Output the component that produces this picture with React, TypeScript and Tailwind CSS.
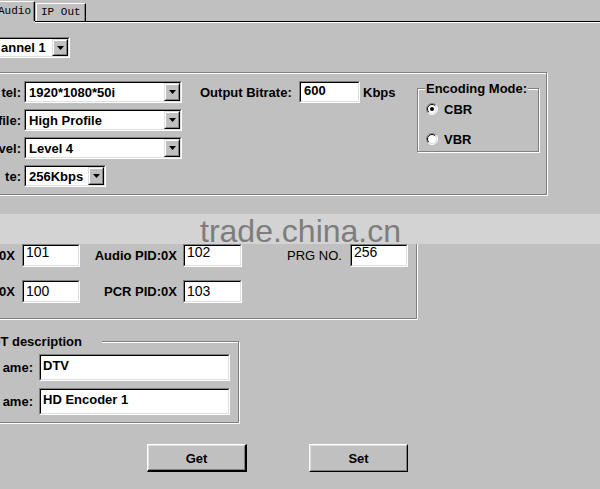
import React from "react";

type Box = { className?: string; children?: React.ReactNode };

// sunken white edit box, classic 3D look
const Field = ({ className = "", children }: Box) => (
  <div className={`border border-t-[#808080] border-l-[#808080] border-r-white border-b-white ${className}`}>
    <div className="flex h-full w-full items-center overflow-hidden border border-t-black border-l-black border-r-[#dfdfdf] border-b-[#dfdfdf] bg-white">
      {children}
    </div>
  </div>
);

const DropButton = () => (
  <div className="w-[16px] self-stretch border border-t-[#dfdfdf] border-l-[#dfdfdf] border-r-black border-b-black bg-[#c0c0c0]">
    <div className="flex h-full w-full items-center justify-center border border-t-white border-l-white border-r-[#808080] border-b-[#808080]">
      <svg width="7" height="4" viewBox="0 0 7 4">
        <path d="M0 0h7L3.5 4z" fill="#000" />
      </svg>
    </div>
  </div>
);

const Combo = ({ value, className }: { value: string; className?: string }) => (
  <Field className={className}>
    <span className="flex-1 whitespace-nowrap pl-[3px]">{value}</span>
    <DropButton />
  </Field>
);

// etched frame used for group boxes
const Group = ({ className = "", children }: Box) => (
  <div className={`relative border border-[#808080] shadow-[inset_1px_1px_0_#fff,1px_1px_0_#fff] ${className}`}>
    {children}
  </div>
);

const Radio = ({ checked }: { checked?: boolean }) => (
  <svg width="12" height="12" viewBox="0 0 12 12">
    <circle cx="6" cy="6" r="5" fill="#fff" />
    <path d="M2.1 9.9A5.5 5.5 0 0 1 9.9 2.1" fill="none" stroke="#808080" />
    <path d="M2.8 9.2A4.5 4.5 0 0 1 9.2 2.8" fill="none" stroke="#000" />
    <path d="M9.9 2.1A5.5 5.5 0 0 1 2.1 9.9" fill="none" stroke="#fff" />
    <path d="M9.2 2.8A4.5 4.5 0 0 1 2.8 9.2" fill="none" stroke="#dfdfdf" />
    {checked && <circle cx="6" cy="6" r="2" fill="#000" />}
  </svg>
);

const PushButton = ({ label, primary, className = "" }: { label: string; primary?: boolean; className?: string }) => (
  <button
    className={`h-[28px] border border-t-white border-l-white border-r-black border-b-black bg-[#c0c0c0] ${
      primary ? "border-r-2 border-b-2" : ""
    } ${className}`}
  >
    <div className="flex h-full w-full items-center justify-center border border-t-[#dfdfdf] border-l-[#dfdfdf] border-r-[#808080] border-b-[#808080] pt-[1px]">
      {label}
    </div>
  </button>
);

const Label = ({ className = "", children }: Box) => (
  <div className={`flex items-center justify-end whitespace-nowrap ${className}`}>{children}</div>
);

export default function App() {
  return (
    <div className="relative h-[489px] w-[600px] overflow-hidden bg-[#c0c0c0] font-['Liberation_Sans',Arial,sans-serif] text-[13px] font-bold leading-none text-black">
      {/* tab strip */}
      <div className="flex h-[21px] items-end font-['Liberation_Mono',monospace] text-[11px] font-normal">
        <div className="-ml-[7px] flex h-[20px] w-[42px] items-center border-t border-t-white border-r border-r-black pl-[5px] shadow-[inset_-1px_0_0_#808080]">
          Audio
        </div>
        <div className="ml-[1px] flex h-[18px] w-[50px] items-center border border-b-0 border-t-white border-l-white border-r-black pl-[4px] shadow-[inset_-1px_0_0_#808080]">
          IP Out
        </div>
      </div>
      <div className="flex h-[2px]">
        <div className="w-[35px]" />
        <div className="flex-1 border-t border-t-black border-b border-b-white" />
      </div>

      {/* channel */}
      <Combo value="annel 1" className="ml-[-20px] mt-[14px] h-[21px] w-[90px] [&_span]:pl-[19px]" />

      {/* video settings */}
      <Group className="-ml-[10px] mt-[14px] h-[123px] w-[557px]">
        <div className="flex pt-[8px]">
          <div className="flex w-[30px] flex-col gap-[6px]">
            <Label className="h-[22px]">tel:</Label>
            <Label className="h-[22px]">file:</Label>
            <Label className="h-[22px]">vel:</Label>
            <Label className="h-[22px]">te:</Label>
          </div>
          <div className="ml-[3px] flex w-[158px] flex-col gap-[6px]">
            <Combo value="1920*1080*50i" className="h-[22px] w-[158px]" />
            <Combo value="High Profile" className="h-[22px] w-[158px]" />
            <Combo value="Level 4" className="h-[22px] w-[158px]" />
            <Combo value="256Kbps" className="h-[22px] w-[82px]" />
          </div>
          <div className="ml-[18px] flex h-[22px] w-[196px] items-center">
            <span className="w-[93px] whitespace-nowrap">Output Bitrate:</span>
            <Field className="ml-[6px] h-[22px] w-[61px]">
              <span className="-mt-[3px] pl-[3px]">600</span>
            </Field>
            <span className="ml-[3px]">Kbps</span>
          </div>
          <Group className="ml-[21px] mt-[7px] h-[64px] w-[122px]">
            <span className="absolute left-[7px] top-[-8px] bg-[#c0c0c0] px-[1px] leading-[15px]">Encoding Mode:</span>
            <div className="flex flex-col gap-[18px] pl-[8px] pt-[14px]">
              <div className="flex h-[12px] items-center gap-[6px]">
                <Radio checked />
                <span>CBR</span>
              </div>
              <div className="flex h-[12px] items-center gap-[6px]">
                <Radio />
                <span>VBR</span>
              </div>
            </div>
          </Group>
        </div>
      </Group>

      {/* PID settings */}
      <Group className="-ml-[10px] mt-[31px] h-[93px] w-[427px]">
        <div className="flex flex-col gap-[13px] pt-[17px]">
          <div className="flex h-[23px]">
            <Label className="w-[24px]">0X</Label>
            <Field className="ml-[7px] w-[58px]">
              <span className="-mt-[7px] pl-[2px] text-[14px] font-normal">101</span>
            </Field>
            <Label className="w-[97px]">Audio PID:0X</Label>
            <Field className="ml-[6px] w-[59px]">
              <span className="-mt-[7px] pl-[2px] text-[14px] font-normal">102</span>
            </Field>
            <Label className="ml-[45px] w-[55px] justify-start font-normal">PRG NO.</Label>
            <Field className="ml-[8px] w-[58px]">
              <span className="-mt-[7px] pl-[2px] text-[14px] font-normal">256</span>
            </Field>
          </div>
          <div className="flex h-[23px]">
            <Label className="w-[24px]">0X</Label>
            <Field className="ml-[7px] w-[58px]">
              <span className="-mt-[2px] pl-[2px] text-[14px] font-normal">100</span>
            </Field>
            <Label className="w-[97px]">PCR PID:0X</Label>
            <Field className="ml-[6px] w-[59px]">
              <span className="-mt-[2px] pl-[2px] text-[14px] font-normal">103</span>
            </Field>
          </div>
        </div>
      </Group>

      {/* service description */}
      <Group className="-ml-[10px] mt-[22px] h-[82px] w-[249px]">
        <span className="absolute left-0 top-[-8px] bg-[#c0c0c0] pr-[20px] leading-[15px]">DT description</span>
        <div className="flex flex-col gap-[7px] pt-[12px]">
          <div className="flex h-[27px]">
            <Label className="w-[42px]">ame:</Label>
            <Field className="ml-[6px] w-[191px]">
              <span className="-mt-[5px] pl-[2px]">DTV</span>
            </Field>
          </div>
          <div className="flex h-[27px]">
            <Label className="w-[42px]">ame:</Label>
            <Field className="ml-[6px] w-[191px]">
              <span className="-mt-[5px] pl-[2px]">HD Encoder 1</span>
            </Field>
          </div>
        </div>
      </Group>

      <div className="mt-[21px] flex">
        <PushButton label="Get" primary className="ml-[147px] w-[100px]" />
        <PushButton label="Set" className="ml-[62px] w-[99px]" />
      </div>

      {/* site watermark strip */}
      <div className="pointer-events-none absolute inset-x-0 top-[214px] h-[30px] bg-[#d3d3d3]" />
      <div className="pointer-events-none absolute left-[200px] top-[219px] text-[32px] leading-[24px] font-normal text-[#7d7d7d]">
        trade.china.cn
      </div>
    </div>
  );
}
